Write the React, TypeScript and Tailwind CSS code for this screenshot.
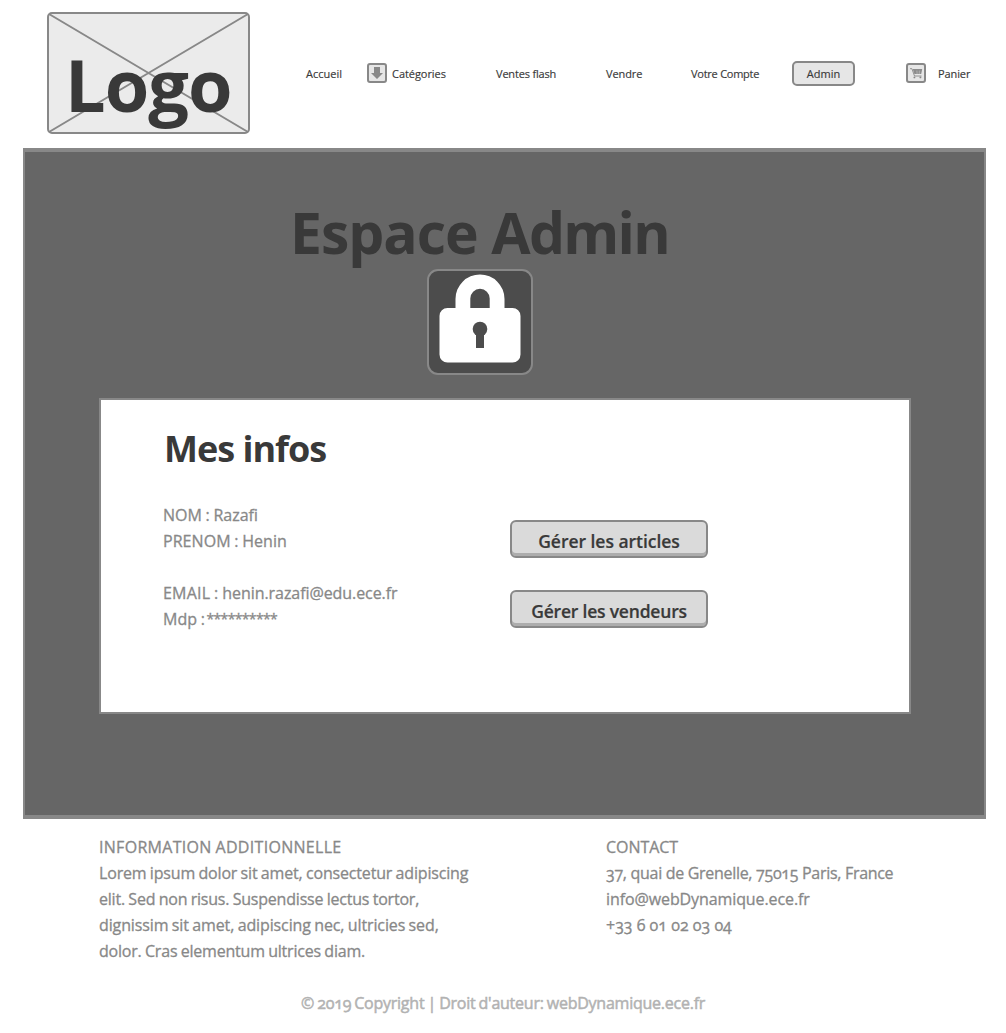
import type { ReactNode } from "react";

function Line({ children, className = "" }: { children: ReactNode; className?: string }) {
  return <div className={`h-[26px] whitespace-nowrap leading-[26px] ${className}`}>{children}</div>;
}

function Logo() {
  return (
    <div className="relative mt-3 ml-[47px] h-[122px] w-[203px] shrink-0">
      <svg className="absolute inset-0" width="203" height="122" fill="none" stroke="#888" strokeWidth="2">
        <rect x="1" y="1" width="201" height="120" rx="4" fill="#ebebeb" />
        <path d="M2 2 201 120M201 2 2 120" />
      </svg>
      <div className="absolute top-[23px] left-[18px] text-[72px] leading-[98px] font-bold tracking-[-1px] text-[#393939]">
        Logo
      </div>
    </div>
  );
}

function IconBox({ children }: { children: ReactNode }) {
  return (
    <span className="h-5 w-5 shrink-0 rounded-[3px] border-2 border-[#888] bg-[#e6e6e6]">
      <svg width="16" height="16" viewBox="2 2 16 16" className="block">
        {children}
      </svg>
    </span>
  );
}

function Nav() {
  return (
    <nav className="mt-[61px] ml-14 flex h-[25px] items-center text-[11px] leading-[26px] whitespace-nowrap text-[#393939] [-webkit-text-stroke:0.15px]">
      <span className="w-[61px]">Accueil</span>
      <span className="-mt-px flex w-[129px] items-center">
        <IconBox>
          <path d="M7 4h6v6h3l-6 6-6-6h3z" fill="#888" />
        </IconBox>
        <span className="mt-px ml-[5px] tracking-[-0.05px]">Catégories</span>
      </span>
      <span className="w-[110px] tracking-[-0.18px]">Ventes flash</span>
      <span className="w-[85px] tracking-[-0.1px]">Vendre</span>
      <span className="w-[101px] tracking-[-0.25px]">Votre Compte</span>
      <span className="h-[25px] w-[63px] rounded-[5px] border-2 border-[#888] bg-[#e6e6e6] text-center leading-[21px]">
        Admin
      </span>
      <span className="-mt-px ml-[51px] flex items-center">
        <IconBox>
          <path d="M4 5.7h1.9L8.5 13h7" fill="none" stroke="#888" strokeWidth=".9" />
          <path d="M6.7 6.1h9.5l-1 4.9H8.4z" fill="#8c8c8c" />
          <path d="M10.9 7.6l.2 3.4M13.4 7.6l-.2 3.4" stroke="#e6e6e6" strokeWidth=".4" />
          <circle cx="8.4" cy="14.4" r=".95" fill="#888" />
          <circle cx="14.4" cy="14.4" r=".95" fill="#888" />
        </IconBox>
        <span className="mt-px ml-3 tracking-[-0.1px]">Panier</span>
      </span>
    </nav>
  );
}

function Lock() {
  return (
    <svg width="106" height="106" className="block">
      <rect x="1" y="1" width="104" height="104" rx="10" fill="#4c4c4c" stroke="#888" strokeWidth="2" />
      <path
        fill="#fff"
        fillRule="evenodd"
        d="M28.5 39V30a24.5 24.5 0 0 1 49 0v9h8a8 8 0 0 1 8 8v38.5a8 8 0 0 1-8 8h-65a8 8 0 0 1-8-8V47a8 8 0 0 1 8-8zM43.3 39h19.4V29.5a9.7 9.7 0 0 0-19.4 0z"
      />
      <circle cx="53" cy="60" r="7.3" fill="#4c4c4c" />
      <path d="M49 60h8v19h-8z" fill="#4c4c4c" />
    </svg>
  );
}

function Button({ children, className }: { children: ReactNode; className: string }) {
  return (
    <button
      className={`h-[38px] w-[198px] rounded-[6px] border-2 border-[#888] bg-[#dadada] pt-[3px] text-[17.5px] leading-[28px] font-semibold whitespace-nowrap text-[#393939] shadow-[inset_0_-3px_0_#adadad] [-webkit-text-stroke:0.2px] ${className}`}
    >
      {children}
    </button>
  );
}

export default function App() {
  return (
    <div className="h-[1033px] w-[1006px] overflow-hidden bg-white font-['Open_Sans',sans-serif] text-base text-[#888] oldstyle-nums">
      <header className="flex h-[148px] items-start">
        <Logo />
        <Nav />
      </header>

      <main className="ml-[23px] flex h-[671px] w-[963px] flex-col border-x-2 border-y-4 border-[#888] bg-[#666]">
        <h1 className="mt-[41px] ml-[265px] h-[76px] text-[57px] leading-[78px] font-bold tracking-[-1.3px] whitespace-nowrap text-[#393939]">
          <span className="tracking-[-1px]">Espace</span> <span className="tracking-[-1.7px]">Admin</span>
        </h1>
        <div className="ml-[402px]">
          <Lock />
        </div>
        <section className="mt-[23px] ml-[74px] h-[316px] w-[812px] border-2 border-[#888] bg-white">
          <h2 className="mt-6 ml-[63px] h-[50px] text-[36px] leading-[50px] font-bold tracking-[-1px] text-[#393939]">
            Mes infos
          </h2>
          <div className="flex">
            <div className="mt-[28px] ml-[62px] w-[347px] [word-spacing:-0.5px] [-webkit-text-stroke:0.3px]">
              <Line>NOM : Razafi</Line>
              <Line className="tracking-[0.05px]">PRENOM : Henin</Line>
              <Line> </Line>
              <Line>
                <span className="tracking-[0.2px]">EMAIL : </span>
                <span className="tracking-[-0.07px]">henin.razafi@edu.ece.fr</span>
              </Line>
              <Line>
                Mdp : <span className="relative -top-px ml-[-2px] text-[14px] tracking-[-0.65px]">**********</span>
              </Line>
            </div>
            <div className="mt-[46px] flex flex-col gap-8">
              <Button className="tracking-[-0.03px]">Gérer les articles</Button>
              <Button className="tracking-[-0.2px]">Gérer les vendeurs</Button>
            </div>
          </div>
        </section>
      </main>

      <footer>
        <div className="mt-[15px] ml-[99px] flex h-[156px] [-webkit-text-stroke:0.3px]">
          <div className="w-[507px] [word-spacing:-0.6px]">
            <Line className="tracking-[0.3px]">INFORMATION ADDITIONNELLE</Line>
            <Line className="tracking-[-0.17px]">Lorem ipsum dolor sit amet, consectetur adipiscing</Line>
            <Line className="tracking-[-0.2px]">elit. Sed non risus. Suspendisse lectus tortor,</Line>
            <Line className="tracking-[-0.12px]">dignissim sit amet, adipiscing nec, ultricies sed,</Line>
            <Line className="tracking-[-0.2px]">dolor. Cras elementum ultrices diam.</Line>
          </div>
          <div>
            <Line className="tracking-[-0.05px]">CONTACT</Line>
            <Line className="tracking-[-0.3px]">37, quai de Grenelle, 75015 Paris, France</Line>
            <Line className="tracking-[-0.1px]">info@webDynamique.ece.fr</Line>
            <Line>+33 6 01 02 03 04</Line>
          </div>
        </div>
        <Line className="ml-[301px] tracking-[-0.24px] text-[#b2b2b2] [word-spacing:-0.8px] [-webkit-text-stroke:0.5px]">
          © 2019 Copyright | Droit d'auteur: webDynamique.ece.fr
        </Line>
      </footer>
    </div>
  );
}
